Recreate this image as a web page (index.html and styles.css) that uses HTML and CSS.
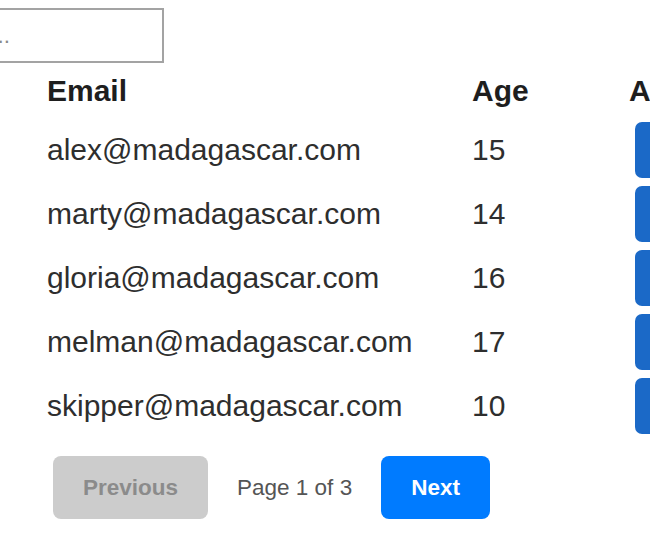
FILE: index.html
```html
<!DOCTYPE html>
<html>
<head>
<meta charset="utf-8">
<link rel="stylesheet" href="styles.css">
</head>
<body>
<div class="page">
  <input class="search" type="text" placeholder="Search...">
  <table class="users">
    <thead>
      <tr><th class="c-email">Email</th><th class="c-age">Age</th><th class="c-act">Actions</th></tr>
    </thead>
    <tbody>
      <tr><td>alex@madagascar.com</td><td>15</td><td><button class="edit">Edit</button></td></tr>
      <tr><td>marty@madagascar.com</td><td>14</td><td><button class="edit">Edit</button></td></tr>
      <tr><td>gloria@madagascar.com</td><td>16</td><td><button class="edit">Edit</button></td></tr>
      <tr><td>melman@madagascar.com</td><td>17</td><td><button class="edit">Edit</button></td></tr>
      <tr><td>skipper@madagascar.com</td><td>10</td><td><button class="edit">Edit</button></td></tr>
    </tbody>
  </table>
  <div class="pager">
    <button class="prev" disabled>Previous</button>
    <span class="info">Page 1 of 3</span>
    <button class="next">Next</button>
  </div>
</div>
</body>
</html>
```

FILE: styles.css
```css
html, body {
  margin: 0;
  padding: 0;
  background: #fff;
  overflow: hidden;
}
body {
  font-family: "Liberation Sans", Arial, sans-serif;
  color: #2a2a2a;
  width: 650px;
  height: 550px;
}
.page {
  width: 650px;
  overflow: hidden;
}
.search {
  display: block;
  box-sizing: border-box;
  margin: 8px 0 0 -96px;
  width: 260px;
  height: 55px;
  border: 2px solid #a3a3a3;
  padding: 0 14px;
  font-family: "Liberation Sans", Arial, sans-serif;
  font-size: 22.5px;
  outline: none;
}
.search::placeholder {
  color: #8a8a8a;
}
.users {
  border-collapse: collapse;
  margin-left: 47px;
  margin-top: 1px;
  table-layout: fixed;
  width: 700px;
}
.users th, .users td {
  padding: 0;
  text-align: left;
  font-size: 30px;
  white-space: nowrap;
}
.users th {
  height: 54px;
  font-weight: bold;
  color: #1e1e1e;
}
.users td {
  height: 64px;
  color: #2e2e2e;
}
.c-email { width: 425px; }
.c-age { width: 157px; }
.c-act { width: 118px; }
.edit {
  display: block;
  margin-left: 6px;
  height: 56px;
  width: 100px;
  border: none;
  border-radius: 7px;
  background: #1b69c7;
  color: #fff;
  font-family: "Liberation Sans", Arial, sans-serif;
  font-size: 22.5px;
  font-weight: bold;
}
.pager {
  display: flex;
  align-items: center;
  gap: 29px;
  margin: 18px 0 0 53px;
}
.pager button {
  height: 63px;
  padding: 0 30px;
  border: none;
  border-radius: 8px;
  font-family: "Liberation Sans", Arial, sans-serif;
  font-size: 22.5px;
  font-weight: bold;
}
.prev {
  background: #cccccc;
  color: #8b8b8b;
}
.next {
  background: #007bff;
  color: #fff;
}
.info {
  font-size: 22.5px;
  color: #555;
}
```
